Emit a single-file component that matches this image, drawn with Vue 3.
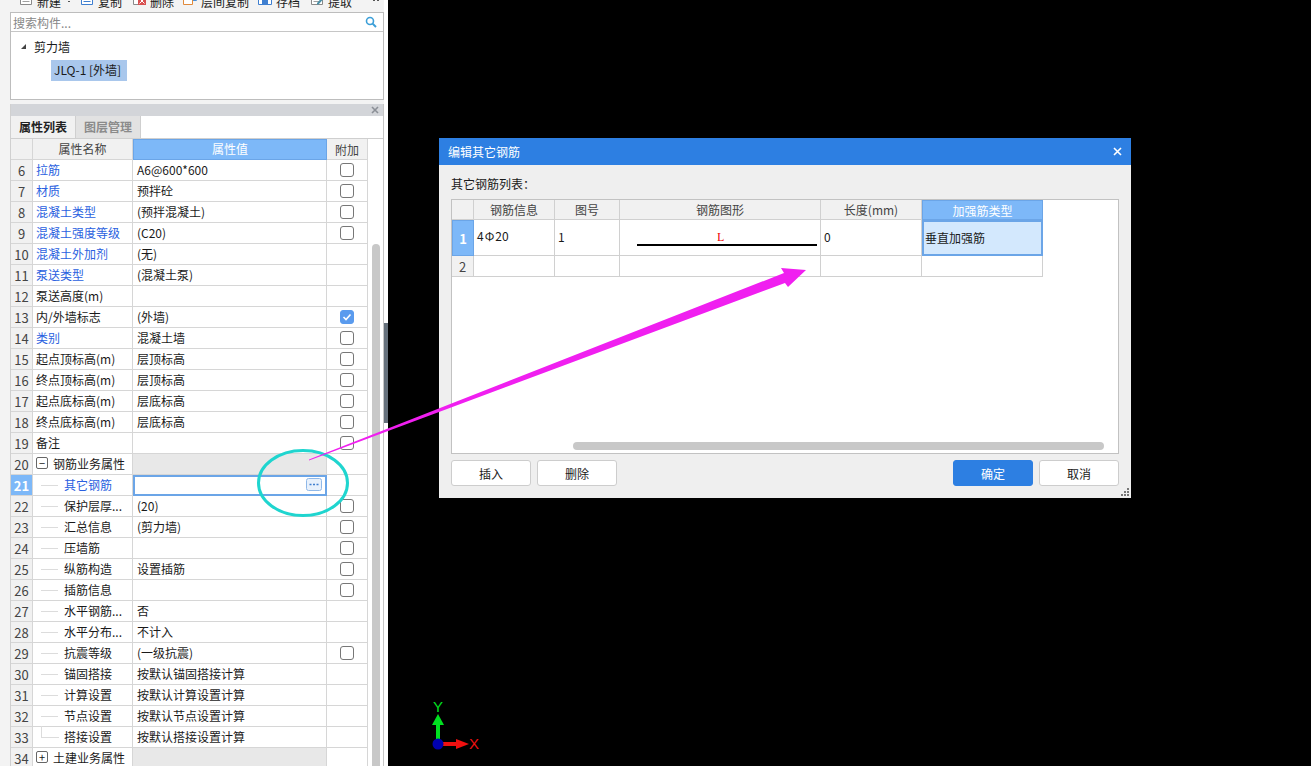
<template>
  <div class="screen">
    <aside class="side">
      <div class="toolbar">
        <div v-for="t in tools" :key="t.name" class="tool" :style="{ width: t.w + 'px' }">
          <svg width="14" height="14" viewBox="0 0 14 14" class="tool-icon">
            <path v-for="p in t.parts" :key="p.d" :d="p.d" :fill="p.fill || 'none'" :stroke="p.stroke || 'none'" />
          </svg>
          <span>{{ t.name }}</span>
          <i v-if="t.drop" class="drop"></i>
        </div>
        <div class="tool-more"><i class="drop"></i><i class="drop"></i></div>
      </div>

      <div class="tree-panel">
        <div class="search">
          <span>搜索构件...</span>
          <svg width="12" height="12" viewBox="0 0 12 12">
            <circle cx="5" cy="5" r="3.5" fill="none" stroke="#3c9fd8" stroke-width="1.6" />
            <path d="M7.6 7.6L11 11" stroke="#3c9fd8" stroke-width="2" />
          </svg>
        </div>
        <div class="tree-root">
          <svg width="7" height="7" viewBox="0 0 7 7"><path d="M6 1V6H1Z" fill="#444" /></svg>
          <span>剪力墙</span>
        </div>
        <div class="tree-leaf">JLQ-1 [外墙]</div>
      </div>

      <div class="prop-panel">
        <div class="panel-head">
          <svg width="8" height="8" viewBox="0 0 8 8"><path d="M1 1L7 7M7 1L1 7" stroke="#8b8f96" stroke-width="1.6" /></svg>
        </div>
        <div class="tabs">
          <div class="tab active">属性列表</div>
          <div class="tab">图层管理</div>
        </div>
        <div class="prop-body">
          <div class="prop-table">
            <div class="cell num head"></div>
            <div class="cell name head">属性名称</div>
            <div class="cell value head on">属性值</div>
            <div class="cell extra head">附加</div>
            <template v-for="r in rows" :key="r.n">
              <div class="cell num" :class="{ picked: r.n === 21 }">{{ r.n }}</div>
              <div class="cell name" :class="{ blue: r.blue, child: r.child, last: r.n === 33 }">
                <span v-if="r.group" class="fold">{{ r.group }}</span>
                <span>{{ r.name }}</span>
              </div>
              <div class="cell value" :class="{ grey: r.group, editing: r.n === 21 }">
                {{ r.value }}
                <span v-if="r.n === 21" class="more">
                  <svg width="16" height="13" viewBox="0 0 16 13">
                    <rect x="0.5" y="0.5" width="15" height="12" rx="2" fill="#e8f1fc" stroke="#8fb8e8" />
                    <path d="M3.500 6.500h2M7 6.500h2M10.500 6.500h2" stroke="#3f7fd0" stroke-width="1.600" />
                  </svg>
                </span>
              </div>
              <div class="cell extra">
                <span v-if="r.cb" class="check" :class="{ checked: r.cb === 2 }">
                  <svg v-if="r.cb === 2" width="10" height="10" viewBox="0 0 10 10">
                    <path d="M1.5 5L4 7.5L8.5 2.5" fill="none" stroke="#fff" stroke-width="1.6" />
                  </svg>
                </span>
              </div>
            </template>
          </div>
          <div class="v-scroll"><div class="v-thumb"></div></div>
        </div>
      </div>
    </aside>

    <div class="splitter"></div>

    <div class="axis">
      <svg width="60" height="60" viewBox="0 0 60 60">
        <rect x="10" y="22" width="4" height="20" fill="#00e020" />
        <path d="M12 11L18 22H6Z" fill="#00e020" />
        <rect x="14" y="39" width="16" height="4" fill="#f01010" />
        <path d="M43 41L30 36V46Z" fill="#f01010" />
        <circle cx="12" cy="41" r="5.500" fill="#0000b0" />
      </svg>
      <span class="axis-y">Y</span>
      <span class="axis-x">X</span>
    </div>

    <section class="dialog">
      <header class="dlg-title">
        <span>编辑其它钢筋</span>
        <svg width="9" height="9" viewBox="0 0 9 9"><path d="M1 1L8 8M8 1L1 8" stroke="#fff" stroke-width="1.6" /></svg>
      </header>
      <div class="dlg-body">
        <div class="dlg-label">其它钢筋列表：</div>
        <div class="grid-box">
          <div class="bar-grid">
            <div class="gc gh"></div>
            <div class="gc gh">钢筋信息</div>
            <div class="gc gh">图号</div>
            <div class="gc gh">钢筋图形</div>
            <div class="gc gh">长度(mm)</div>
            <div class="gc gh on">加强筋类型</div>

            <div class="gc gn picked tall">1</div>
            <div class="gc tall left info">4<span class="grade">Φ</span>20</div>
            <div class="gc tall left">1</div>
            <div class="gc tall shape"><span class="shape-l">L</span><i class="shape-bar"></i></div>
            <div class="gc tall left">0</div>
            <div class="gc tall left sel">垂直加强筋</div>

            <div class="gc gn">2</div>
            <div class="gc"></div>
            <div class="gc"></div>
            <div class="gc"></div>
            <div class="gc"></div>
            <div class="gc"></div>
          </div>
          <div class="h-scroll"><div class="h-thumb"></div></div>
        </div>
        <div class="dlg-btns">
          <button class="btn">插入</button>
          <button class="btn">删除</button>
          <span class="spacer"></span>
          <button class="btn primary">确定</button>
          <button class="btn">取消</button>
        </div>
      </div>
      <svg class="grip" width="10" height="10" viewBox="0 0 10 10">
        <path d="M7 1h2v2H7zM4 4h2v2H4zM7 4h2v2H7zM1 7h2v2H1zM4 7h2v2H4zM7 7h2v2H7z" fill="#777" />
      </svg>
    </section>

    <svg class="marks" width="1311" height="766" viewBox="0 0 1311 766">
      <ellipse cx="303" cy="483" rx="44.500" ry="32.500" fill="none" stroke="#1fd5cf" stroke-width="3" />
      <path d="M309 459.500L784 273L781 268L806 270L788 287L785 283L309 460.500Z" fill="#f01ff0" />
    </svg>
  </div>
</template>

<script setup>
const sheet = (color) => ({ d: 'M1.500 0.500H12.500V13.500H1.500Z', fill: '#fff', stroke: color })
const lines = (color) => ({ d: 'M3.500 4.500h7M3.500 7.500h7M3.500 10.500h7', stroke: color })

const tools = [
  { name: '新建', w: 61, drop: true, parts: [sheet('#8a8a8a'), lines('#a0a0a0')] },
  { name: '复制', w: 52, parts: [sheet('#3f7fd0'), lines('#3f7fd0')] },
  {
    name: '删除',
    w: 51,
    parts: [
      sheet('#8a8a8a'),
      { d: 'M6 6H14V14H6Z', fill: '#d85050' },
      { d: 'M7.500 7.500L12.500 12.500M12.500 7.500L7.500 12.500', stroke: '#fff' },
    ],
  },
  {
    name: '层间复制',
    w: 75,
    parts: [
      { d: 'M4.500 0.500H13.500V9.500H4.500Z', fill: '#fff', stroke: '#4a90d8' },
      { d: 'M0.500 4.500H9.500V13.500H0.500Z', fill: '#fff', stroke: '#e08a3c' },
    ],
  },
  {
    name: '存档',
    w: 52,
    parts: [
      { d: 'M0.500 0.500H13.500V13.500H0.500Z', fill: '#fff', stroke: '#3f7fd0' },
      { d: 'M4 8H10V13H4Z', fill: '#3f7fd0' },
      { d: 'M3 3.500H11', stroke: '#3f7fd0' },
    ],
  },
  {
    name: '提取',
    w: 50,
    parts: [
      sheet('#8a8a8a'),
      lines('#a0a0a0'),
      { d: 'M7 12L12.500 6L14 7.500L8.500 13.500H7Z', fill: '#4a90a8' },
    ],
  },
]

const rows = [
  { n: 6, name: '拉筋', value: 'A6@600*600', cb: 1, blue: true },
  { n: 7, name: '材质', value: '预拌砼', cb: 1, blue: true },
  { n: 8, name: '混凝土类型', value: '(预拌混凝土)', cb: 1, blue: true },
  { n: 9, name: '混凝土强度等级', value: '(C20)', cb: 1, blue: true },
  { n: 10, name: '混凝土外加剂', value: '(无)', blue: true },
  { n: 11, name: '泵送类型', value: '(混凝土泵)', blue: true },
  { n: 12, name: '泵送高度(m)', value: '' },
  { n: 13, name: '内/外墙标志', value: '(外墙)', cb: 2 },
  { n: 14, name: '类别', value: '混凝土墙', cb: 1, blue: true },
  { n: 15, name: '起点顶标高(m)', value: '层顶标高', cb: 1 },
  { n: 16, name: '终点顶标高(m)', value: '层顶标高', cb: 1 },
  { n: 17, name: '起点底标高(m)', value: '层底标高', cb: 1 },
  { n: 18, name: '终点底标高(m)', value: '层底标高', cb: 1 },
  { n: 19, name: '备注', value: '', cb: 1 },
  { n: 20, name: '钢筋业务属性', value: '', group: '−' },
  { n: 21, name: '其它钢筋', value: '', child: true, blue: true },
  { n: 22, name: '保护层厚...', value: '(20)', cb: 1, child: true },
  { n: 23, name: '汇总信息', value: '(剪力墙)', cb: 1, child: true },
  { n: 24, name: '压墙筋', value: '', cb: 1, child: true },
  { n: 25, name: '纵筋构造', value: '设置插筋', cb: 1, child: true },
  { n: 26, name: '插筋信息', value: '', cb: 1, child: true },
  { n: 27, name: '水平钢筋...', value: '否', child: true },
  { n: 28, name: '水平分布...', value: '不计入', child: true },
  { n: 29, name: '抗震等级', value: '(一级抗震)', cb: 1, child: true },
  { n: 30, name: '锚固搭接', value: '按默认锚固搭接计算', child: true },
  { n: 31, name: '计算设置', value: '按默认计算设置计算', child: true },
  { n: 32, name: '节点设置', value: '按默认节点设置计算', child: true },
  { n: 33, name: '搭接设置', value: '按默认搭接设置计算', child: true },
  { n: 34, name: '土建业务属性', value: '', group: '+' },
]
</script>

<style>
html, body {
  margin: 0;
  background: #000;
}
</style>

<style scoped>
* {
  box-sizing: border-box;
}

.screen {
  position: relative;
  display: flex;
  width: 1311px;
  height: 766px;
  overflow: hidden;
  background: #000;
  color: #1a1a1a;
  font: 12px "Noto Sans CJK SC", "Noto Sans", sans-serif;
}

.side {
  width: 384px;
  flex: none;
  padding-left: 10px;
  background: #f3f3f3;
}

.splitter {
  width: 4px;
  flex: none;
  background: linear-gradient(#fff 323px, #66717c 323px, #66717c 423px, #fff 423px);
}

.toolbar {
  display: flex;
  height: 12px;
  padding-left: 9px;
  overflow: hidden;
}

.tool {
  display: flex;
  flex: none;
  align-items: center;
  gap: 4px;
  height: 16px;
  margin-top: -7px;
}

.tool-icon {
  flex: none;
  margin-top: -6px;
}

.drop {
  display: block;
  flex: none;
  width: 2px;
  height: 1px;
  margin-left: 3px;
  background: #555;
}

.tool-more {
  display: flex;
  height: 2px;
  margin-left: 13px;
}

.tool-more .drop {
  margin-left: 0;
  margin-right: 2px;
}

.tree-panel {
  height: 88px;
  border: 1px solid #bdbdbd;
  background: #fff;
}

.search {
  display: flex;
  height: 19px;
  padding: 0 6px 0 2px;
  align-items: center;
  justify-content: space-between;
  border-bottom: 1px solid #c6c6c6;
  color: #888;
}

.tree-root {
  display: flex;
  height: 21px;
  margin-top: 4px;
  padding-left: 9px;
  align-items: center;
  gap: 7px;
}

.tree-leaf {
  width: 76px;
  height: 21px;
  margin: 3px 0 0 40px;
  padding-left: 3px;
  line-height: 20px;
  background: #a9c7ec;
  white-space: nowrap;
}

.prop-panel {
  margin-top: 4px;
  border-left: 1px solid #d0d0d0;
  border-right: 1px solid #c6c6c6;
  background: #fff;
}

.panel-head {
  display: flex;
  height: 12px;
  padding-right: 4px;
  align-items: center;
  justify-content: flex-end;
  background: #d3d5d9;
}

.tabs {
  display: flex;
  height: 23px;
  border-bottom: 1px solid #cfcfcf;
}

.tab {
  width: 65px;
  line-height: 22px;
  text-align: center;
  font-weight: 700;
  color: #8b8b8b;
  background: #e2e2e2;
  border-right: 1px solid #cfcfcf;
}

.tab.active {
  color: #222;
  background: #f1f1f1;
}

.prop-body {
  display: flex;
}

.prop-table {
  display: grid;
  grid-template-columns: 22px 100px 194px 41px;
  grid-auto-rows: 21px;
  flex: none;
  width: 357px;
}

.cell {
  display: flex;
  min-width: 0;
  padding-left: 3px;
  align-items: center;
  border-right: 1px solid #d6d6d6;
  border-bottom: 1px solid #d6d6d6;
  white-space: nowrap;
}

.head {
  justify-content: center;
  padding-left: 0;
  color: #444;
  background: #f1f1f1;
}

.head.on {
  color: #fff;
  background: #7db8f8;
  border: 1px solid #6ba5e7;
}

.num {
  justify-content: center;
  padding-left: 0;
  font-size: 13px;
  color: #444;
  background: #f1f1f1;
}

.num.picked {
  color: #fff;
  font-weight: 700;
  background: #7db8f8;
}

.name {
  position: relative;
  gap: 5px;
  padding-bottom: 2px;
}

.name.head {
  justify-content: center;
}

.blue {
  color: #2a5fe0;
}

.child {
  padding-left: 31px;
}

.child::before {
  content: "";
  position: absolute;
  left: 8px;
  top: -1px;
  bottom: 9px;
  width: 17px;
  border-bottom: 1px solid #dcdcdc;
}

.last::before {
  border-left: 1px solid #dcdcdc;
}

.fold {
  display: flex;
  width: 12px;
  height: 12px;
  align-items: center;
  justify-content: center;
  border: 1px solid #666;
  border-radius: 2px;
  font-size: 11px;
  line-height: 1;
}

.value {
  position: relative;
  padding-left: 4px;
  padding-bottom: 2px;
}

.value.head {
  padding-left: 0;
}

.grey {
  background: #e8e8e8;
}

.editing {
  border: 2px solid #6ba5e7;
}

.more {
  position: absolute;
  right: 3px;
  top: 1px;
  display: flex;
}

.extra {
  justify-content: center;
  padding-left: 0;
}

.check {
  display: flex;
  width: 14px;
  height: 14px;
  align-items: center;
  justify-content: center;
  border: 1px solid #777;
  border-radius: 3px;
}

.check.checked {
  background: #5a9bee;
  border-color: #5a9bee;
}

.v-scroll {
  width: 15px;
  padding: 105px 3px 0 4px;
  overflow: hidden;
}

.v-thumb {
  height: 600px;
  border-radius: 4px;
  background: #c8c8c8;
}

.axis {
  position: absolute;
  left: 426px;
  top: 703px;
  width: 60px;
  height: 60px;
}

.axis-y,
.axis-x {
  position: absolute;
  font: 15px/16px "Liberation Sans", sans-serif;
}

.axis-y {
  left: 7px;
  top: -4px;
  color: #00e020;
}

.axis-x {
  left: 43px;
  top: 33px;
  color: #f01010;
}

.dialog {
  position: absolute;
  left: 439px;
  top: 138px;
  width: 692px;
  height: 360px;
  background: #efefef;
}

.dlg-title {
  display: flex;
  height: 27px;
  padding: 0 9px;
  align-items: center;
  justify-content: space-between;
  color: #fff;
  background: #2d7fe2;
}

.dlg-body {
  padding: 0 12px;
}

.dlg-label {
  height: 34px;
  padding-top: 10px;
  line-height: 17px;
}

.grid-box {
  display: flex;
  position: relative;
  height: 255px;
  border: 1px solid #c2c2c2;
  background: #fff;
}

.bar-grid {
  display: grid;
  grid-template-columns: 22px 81px 65px 201px 101px 121px;
  grid-template-rows: 20px 36px 21px;
  align-content: start;
}

.gc {
  display: flex;
  min-width: 0;
  align-items: center;
  justify-content: center;
  border-right: 1px solid #d0d0d0;
  border-bottom: 1px solid #d0d0d0;
}

.gh {
  color: #444;
  background: #f1f1f1;
}

.gh.on {
  color: #fff;
  background: #7db8f8;
  border: 1px solid #6ba5e7;
}

.gn {
  font-size: 13px;
  color: #444;
  background: #f1f1f1;
}

.gn.picked {
  color: #fff;
  font-weight: 700;
  background: #7db8f8;
  border: 1px solid #6ba5e7;
}

.left {
  justify-content: flex-start;
  padding-left: 3px;
  padding-bottom: 2px;
}

.info {
  padding-bottom: 4px;
}

.grade {
  margin: 0 1px;
}

.shape {
  flex-direction: column;
  align-items: flex-start;
  justify-content: flex-start;
}

.shape-l {
  margin: 11px 0 0 97px;
  font: 12px/12px "Liberation Serif", serif;
  color: #f00000;
}

.shape-bar {
  display: block;
  width: 180px;
  height: 2px;
  margin: 1px 0 0 17px;
  background: #000;
}

.sel {
  background: #d3e8fd;
  border: 2px solid #6ba5e7;
  padding-left: 1px;
}

.h-scroll {
  position: absolute;
  left: 121px;
  right: 14px;
  bottom: 3px;
}

.h-thumb {
  height: 8px;
  border-radius: 4px;
  background: #c8c8c8;
}

.dlg-btns {
  display: flex;
  margin-top: 6px;
  gap: 6px;
}

.spacer {
  flex: 1;
}

.btn {
  width: 80px;
  height: 26px;
  padding: 0;
  font: inherit;
  color: #1a1a1a;
  background: #fff;
  border: 1px solid #cdcdcd;
  border-radius: 3px;
}

.btn.primary {
  color: #fff;
  background: #2d7fe2;
  border-color: #2d7fe2;
}

.grip {
  position: absolute;
  right: 1px;
  bottom: 1px;
}

.marks {
  position: absolute;
  left: 0;
  top: 0;
  pointer-events: none;
}
</style>
